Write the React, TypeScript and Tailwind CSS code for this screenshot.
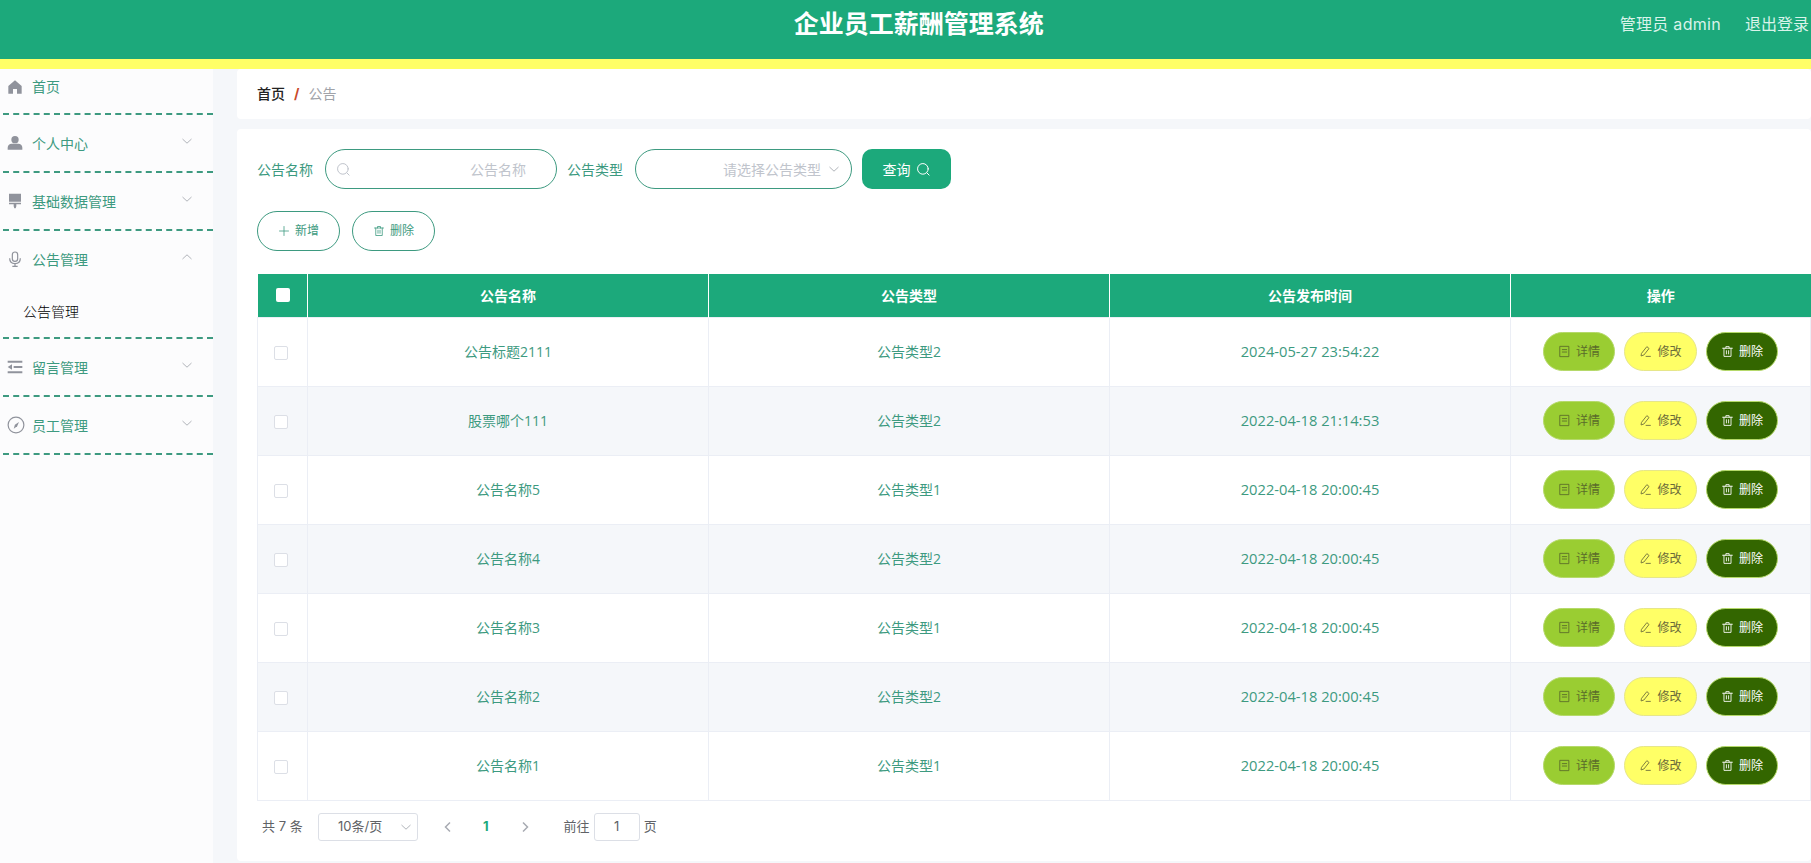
import React from "react";

const FONT = "[font-family:'Inter','Noto_Sans_CJK_SC',sans-serif]";
const CELL_FONT = "[font-family:'Open_Sans','Noto_Sans_CJK_SC',sans-serif]";

const S = ({ size = 14, children, className = "" }: { size?: number; children: React.ReactNode; className?: string }) => (
  <svg width={size} height={size} viewBox="0 0 24 24" fill="none" stroke="currentColor" strokeWidth="1.6" strokeLinecap="round" strokeLinejoin="round" className={`shrink-0 ${className}`}>
    {children}
  </svg>
);

const Chevron = ({ up = false }: { up?: boolean }) => (
  <svg width="12" height="12" viewBox="0 0 12 12" fill="none" stroke="#a8abb2" strokeWidth="0.9" className="shrink-0">
    <path d={up ? "M1.5 8 6 3.8 10.5 8" : "M1.5 4 6 8.2 10.5 4"} />
  </svg>
);

const Search = ({ size = 15 }: { size?: number }) => (
  <S size={size}><circle cx="11" cy="11" r="8.5" /><path d="m17.5 17.5 3.5 3.5" /></S>
);
const Trash = ({ size = 13 }: { size?: number }) => (
  <S size={size}><path d="M3 6h18M9 6V3h6v3M5.5 6v15h13V6M10 10.5v6M14 10.5v6" /></S>
);
const Doc = () => (
  <S size={13}><rect x="4" y="2.500" width="16" height="19" /><path d="M8 8.500h8M8 13h8" /></S>
);
const Pencil = () => (
  <S size={13}><path d="M5 15 14.500 3l4 3.500L9 18.500l-4.500 1.500zM13 21h8" /></S>
);

const icons: Record<string, React.ReactNode> = {
  home: <svg width="16" height="16" viewBox="0 0 24 24" fill="#90939c"><path d="M12 2 2 10.500V22h7v-7h6v7h7V10.500z" /></svg>,
  user: <svg width="16" height="16" viewBox="0 0 24 24" fill="#90939c"><circle cx="12" cy="7" r="5.500" /><path d="M1 22v-3c0-4 3-6 6-6h10c3 0 6 2 6 6v3z" /></svg>,
  brush: <svg width="16" height="16" viewBox="0 0 24 24" fill="#90939c"><path d="M3 1h18v12H3zM3 14.500h18V17h-7v3l-1 3h-2l-1-3v-3H3z" /></svg>,
  mic: <svg width="16" height="16" viewBox="0 0 24 24" fill="none" stroke="#90939c" strokeWidth="1.8"><rect x="8" y="1.500" width="8" height="14" rx="4" /><path d="M4 11c0 5 3.500 8 8 8s8-3 8-8M12 19v4M8 23h8" /></svg>,
  list: <svg width="16" height="16" viewBox="0 0 24 24" fill="#90939c"><path d="M1 2.500h22v3H1zM10 10.500h13v3H10zM1 18.500h22v3H1zM7.500 8v8L1 12z" /></svg>,
  compass: <svg width="18" height="18" viewBox="0 0 24 24" fill="none" stroke="#90939c" strokeWidth="1.6"><circle cx="12" cy="12" r="10.500" /><path d="M16 8 13.500 13.500 9 17l1.500-5.500z" fill="#90939c" stroke="none" /></svg>,
};

const menu = [
  { icon: "user", label: "个人中心" },
  { icon: "brush", label: "基础数据管理" },
];

const MenuRow = ({ icon, label, chevron, up }: { icon: string; label: string; chevron?: boolean; up?: boolean }) => (
  <div className="flex h-[56px] items-center pl-[7px] pr-[20px] text-[14px] text-[#3d9a80]">
    <span className="flex w-[25px] justify-start">{icons[icon]}</span>
    <span className="flex-1">{label}</span>
    {chevron && <span className="-mt-[4px]"><Chevron up={up} /></span>}
  </div>
);

const Dash = () => <div className="ml-[3px] border-b-2 border-dashed border-[#3d9a80]" />;

const Sidebar = () => (
  <aside className="w-[213px] shrink-0 bg-[#fcfcfd]">
    <div className="flex h-[44px] items-center pb-[9px] pl-[7px] text-[14px] text-[#3d9a80]">
      <span className="flex w-[25px]">{icons.home}</span>
      <span>首页</span>
    </div>
    <Dash />
    {menu.map((m) => (
      <React.Fragment key={m.label}>
        <MenuRow icon={m.icon} label={m.label} chevron />
        <Dash />
      </React.Fragment>
    ))}
    <MenuRow icon="mic" label="公告管理" chevron up />
    <div className="flex h-[50px] items-center pb-[2px] pl-[23px] text-[14px] font-light text-black">公告管理</div>
    <Dash />
    <MenuRow icon="list" label="留言管理" chevron />
    <Dash />
    <MenuRow icon="compass" label="员工管理" chevron />
    <Dash />
  </aside>
);

const rows = [
  ["公告标题2111", "公告类型2", "2024-05-27 23:54:22"],
  ["股票哪个111", "公告类型2", "2022-04-18 21:14:53"],
  ["公告名称5", "公告类型1", "2022-04-18 20:00:45"],
  ["公告名称4", "公告类型2", "2022-04-18 20:00:45"],
  ["公告名称3", "公告类型1", "2022-04-18 20:00:45"],
  ["公告名称2", "公告类型2", "2022-04-18 20:00:45"],
  ["公告名称1", "公告类型1", "2022-04-18 20:00:45"],
];

const ActionBtn = ({ className, icon, label }: { className: string; icon: React.ReactNode; label: string }) => (
  <button className={`flex h-[39px] items-center justify-center gap-[5px] rounded-[20px] border text-[12px] ${className}`}>
    {icon}
    {label}
  </button>
);

const OutlineBtn = ({ icon, label }: { icon: React.ReactNode; label: string }) => (
  <button className="flex h-[40px] w-[83px] items-center justify-center gap-[5px] rounded-[20px] border border-[#3d9a80] bg-white text-[12px] text-[#3d9a80]">
    {icon}
    {label}
  </button>
);

const Table = () => (
  <table className="w-[1553px] table-fixed border-collapse">
    <colgroup>
      <col className="w-[50px]" />
      <col className="w-[401px]" />
      <col className="w-[401px]" />
      <col className="w-[401px]" />
      <col className="w-[300px]" />
    </colgroup>
    <thead>
      <tr className="h-[43px] bg-[#1ca97b] text-[14px] font-bold text-white">
        <th className="border-r border-white">
          <span className="mx-auto block h-[14px] w-[14px] translate-x-[1px] rounded-[2px] bg-white" />
        </th>
        <th className="border-r border-white">公告名称</th>
        <th className="border-r border-white">公告类型</th>
        <th className="border-r border-white">公告发布时间</th>
        <th>操作</th>
      </tr>
    </thead>
    <tbody>
      {rows.map((r, i) => (
        <tr key={i} className={`h-[69px] text-[14px] text-[#3d9a80] ${CELL_FONT} ${i % 2 ? "bg-[#f5f7fa]" : "bg-white"}`}>
          <td className="border border-[#ebeef5]">
            <span className="mx-auto mt-[2px] block h-[14px] w-[14px] -translate-x-[2px] rounded-[2px] border border-[#dcdfe6] bg-white" />
          </td>
          <td className="border border-[#ebeef5] text-center">{r[0]}</td>
          <td className="border border-[#ebeef5] text-center">{r[1]}</td>
          <td className="border border-[#ebeef5] text-center text-[14.7px]">{r[2]}</td>
          <td className={`border border-[#ebeef5] ${FONT}`}>
            <div className="flex items-center justify-center gap-[9px]">
              <ActionBtn className="w-[72px] border-[#b5d96a] bg-[#9acd32] text-[#5a6b2a]" icon={<Doc />} label="详情" />
              <ActionBtn className="w-[73px] border-[#e6e68a] bg-[#ffff66] text-[#6b6b3a]" icon={<Pencil />} label="修改" />
              <ActionBtn className="w-[72px] border-[#b5d96a] bg-[#336600] text-white" icon={<Trash />} label="删除" />
            </div>
          </td>
        </tr>
      ))}
    </tbody>
  </table>
);

export default function App() {
  return (
    <div className={`flex h-[863px] w-[1811px] flex-col overflow-hidden bg-[#f5f7fa] ${FONT}`}>
      <header className="flex h-[69px] shrink-0 items-start border-b-[10px] border-[#ffff66] bg-[#1ca97b] text-white">
        <div className="flex h-[49px] flex-1 items-center justify-center pl-[218px] text-[25px] font-bold">企业员工薪酬管理系统</div>
        <div className="flex h-[48px] items-center gap-[24px] pr-[2px] text-[16px] text-[#d9f3ea]">
          <span className="tracking-[0.3px]">管理员 admin</span>
          <span>退出登录</span>
        </div>
      </header>
      <div className="flex min-h-0 flex-1">
        <Sidebar />
        <main className="ml-[24px] flex min-w-0 flex-1 flex-col gap-[10px]">
          <div className="flex h-[50px] shrink-0 items-center rounded-[4px] bg-white pb-[2px] pl-[20px] text-[14px]">
            <span className="font-medium text-[#222]">首页</span>
            <span className="mx-[9px] font-bold text-[#c9492b]">/</span>
            <span className="text-[#a0a3a9]">公告</span>
          </div>
          <div className="h-[732px] shrink-0 rounded-[4px] bg-white px-[20px] pt-[20px]">
            <div className="flex h-[40px] items-center text-[14px] text-[#3d9a80]">
              <span className="w-[68px]">公告名称</span>
              <div className="flex h-[40px] w-[232px] items-center rounded-[20px] border border-[#3d9a80] pl-[10px] pr-[30px] text-[#c0c4cc]">
                <Search />
                <span className="flex-1 text-right">公告名称</span>
              </div>
              <span className="ml-[10px] w-[68px]">公告类型</span>
              <div className="flex h-[40px] w-[217px] items-center justify-end gap-[7px] rounded-[20px] border border-[#3d9a80] pr-[11px] text-[#c0c4cc]">
                <span>请选择公告类型</span>
                <Chevron />
              </div>
              <button className="ml-[10px] flex h-[40px] w-[89px] items-center justify-center gap-[5px] rounded-[10px] bg-[#1ca97b] text-[14px] text-white">
                查询 <Search />
              </button>
            </div>
            <div className="mt-[22px] flex gap-[12px]">
              <OutlineBtn icon={<S size={12}><path d="M12 3v18M3 12h18" /></S>} label="新增" />
              <OutlineBtn icon={<Trash size={12} />} label="删除" />
            </div>
            <div className="mt-[23px]">
              <Table />
            </div>
            <div className="mt-[6px] flex h-[28px] translate-y-[6px] items-center pl-[5px] text-[13px] text-[#606266]">
              <span className="w-[56px]">共 7 条</span>
              <div className="flex h-[28px] w-[100px] items-center justify-between rounded-[3px] border border-[#dcdfe6] pl-[19px] pr-[5px]">
                <span>10条/页</span>
                <Chevron />
              </div>
              <svg width="10" height="12" viewBox="0 0 10 12" fill="none" stroke="#a8abb2" strokeWidth="1.5" className="ml-[25px]"><path d="M7 1.500 2.500 6 7 10.500" /></svg>
              <span className="ml-[30px] font-bold text-[#1ca97b]">1</span>
              <svg width="10" height="12" viewBox="0 0 10 12" fill="none" stroke="#a8abb2" strokeWidth="1.5" className="ml-[31px]"><path d="M3 1.500 7.500 6 3 10.500" /></svg>
              <span className="ml-[34px]">前往</span>
              <div className="ml-[4px] flex h-[28px] w-[46px] items-center justify-center rounded-[3px] border border-[#dcdfe6]">1</div>
              <span className="ml-[4px]">页</span>
            </div>
          </div>
        </main>
      </div>
    </div>
  );
}
